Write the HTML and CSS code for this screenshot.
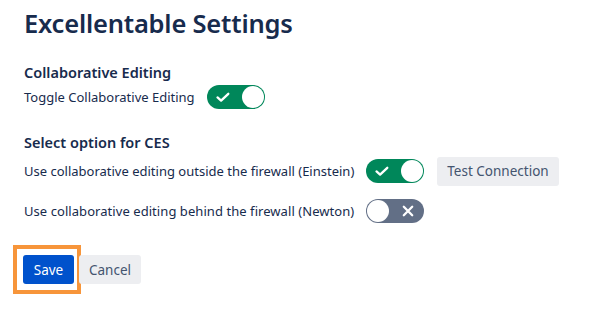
FILE: index.html
```html
<!DOCTYPE html>
<html>
<head>
<meta charset="utf-8">
<link rel="stylesheet" href="styles.css">
</head>
<body>
<div class="page">
  <h1 class="title">Excellentable Settings</h1>
  <h2 class="heading h-first">Collaborative Editing</h2>
  <div class="row">
    <span class="label">Toggle Collaborative Editing</span>
    <span class="toggle on">
      <svg class="icon" viewBox="0 0 16 16" width="16" height="16"><path d="M2.5 8.4l3.6 3.2 7.2-6.8" fill="none" stroke="#fff" stroke-width="2.3" stroke-linecap="round" stroke-linejoin="round"/></svg>
      <span class="knob"></span>
    </span>
  </div>
  <h2 class="heading h-second">Select option for CES</h2>
  <div class="row row-ces">
    <span class="label">Use collaborative editing outside the firewall (Einstein)</span>
    <span class="toggle on">
      <svg class="icon" viewBox="0 0 16 16" width="16" height="16"><path d="M2.5 8.4l3.6 3.2 7.2-6.8" fill="none" stroke="#fff" stroke-width="2.3" stroke-linecap="round" stroke-linejoin="round"/></svg>
      <span class="knob"></span>
    </span>
    <button class="btn btn-subtle btn-test">Test Connection</button>
  </div>
  <div class="row row-ces2">
    <span class="label">Use collaborative editing behind the firewall (Newton)</span>
    <span class="toggle off">
      <span class="knob"></span>
      <svg class="icon" viewBox="0 0 16 16" width="16" height="16"><path d="M3.8 3.8l8.4 8.4M12.2 3.8l-8.4 8.4" fill="none" stroke="#fff" stroke-width="2.3" stroke-linecap="round"/></svg>
    </span>
  </div>
  <div class="actions">
    <span class="highlight"><button class="btn btn-primary">Save</button></span>
    <button class="btn btn-subtle">Cancel</button>
  </div>
</div>
</body>
</html>
```
FILE: styles.css
```css
html, body {
  margin: 0;
  padding: 0;
  background: #fff;
}
body {
  font-family: "Noto Sans", "Open Sans", sans-serif;
  color: #172B4D;
}
.page {
  padding: 6px 24px 0 24px;
}
.title {
  margin: 0;
  font-size: 25.5px;
  line-height: 34px;
  font-weight: 600;
  color: #172B4D;
  letter-spacing: -0.2px;
}
.heading {
  margin: 0;
  font-size: 14.5px;
  line-height: 20px;
  font-weight: 600;
  color: #172B4D;
}
.h-first {
  margin-top: 22px;
}
.h-second {
  margin-top: 20px;
}
.row {
  display: flex;
  align-items: center;
  gap: 12px;
  height: 30px;
}
.row-ces {
  margin-top: 4px;
}
.row-ces2 {
  margin-top: 10px;
}
.row-ces2 .label {
  letter-spacing: 0.06px;
}
.label {
  font-size: 13px;
  line-height: 20px;
  color: #172B4D;
}
.toggle {
  box-sizing: border-box;
  width: 58px;
  height: 24px;
  border-radius: 12px;
  display: flex;
  align-items: center;
  justify-content: space-between;
  padding: 1px;
  flex: none;
}
.toggle.on {
  background: #00875A;
  padding-left: 8px;
}
.toggle.off {
  background: #626F86;
  padding-right: 8px;
}
.knob {
  width: 22px;
  height: 22px;
  border-radius: 50%;
  background: #fff;
  flex: none;
}
.icon {
  display: block;
  flex: none;
}
.btn {
  font-family: inherit;
  font-size: 13.5px;
  line-height: 20px;
  height: 29px;
  padding: 0 10px;
  border: none;
  border-radius: 3px;
  cursor: pointer;
}
.btn-subtle {
  background: #EDEEF1;
  color: #44546F;
}
.btn-test {
  margin-left: 1px;
}
.btn-primary {
  display: block;
  background: #0052CC;
  color: #fff;
  width: 51px;
  padding: 0;
}
.actions {
  display: flex;
  align-items: center;
  margin-top: 19px;
  margin-left: -11px;
}
.highlight {
  display: block;
  border: 4px solid #F7953A;
  padding: 6px 3px 6px 6px;
}
.actions .btn-subtle {
  margin-left: -2px;
}
```
